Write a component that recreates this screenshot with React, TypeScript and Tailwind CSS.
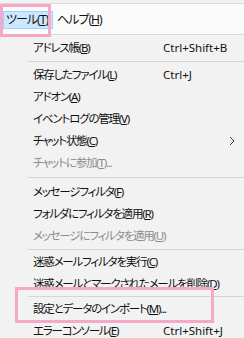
import React from "react";

type Item =
  | { sep: true; h: string }
  | {
      sep?: false;
      pre: string;
      key: string;
      post?: string;
      shortcut?: string;
      disabled?: boolean;
      arrow?: boolean;
    };

const items: Item[] = [
  { pre: "アドレス帳(", key: "B", post: ")", shortcut: "Ctrl+Shift+B" },
  { sep: true, h: "h-[5px]" },
  { pre: "保存したファイル(", key: "L", post: ")", shortcut: "Ctrl+J" },
  { pre: "アドオン(", key: "A", post: ")" },
  { pre: "イベントログの管理(", key: "V", post: ")" },
  { pre: "チャット状態(", key: "C", post: ")", arrow: true },
  { pre: "チャットに参加(", key: "T", post: ")...", disabled: true },
  { sep: true, h: "h-[7px]" },
  { pre: "メッセージフィルタ(", key: "F", post: ")" },
  { pre: "フォルダにフィルタを適用(", key: "R", post: ")" },
  { pre: "メッセージにフィルタを適用(", key: "U", post: ")", disabled: true },
  { sep: true, h: "h-[4px]" },
  { pre: "迷惑メールフィルタを実行(", key: "C", post: ")" },
  { pre: "迷惑メールとマークされたメールを削除(", key: "D", post: ")" },
  { sep: true, h: "h-[3px]" },
  { pre: "設定とデータのインポート(", key: "M", post: ")..." },
  { pre: "エラーコンソール(", key: "E", post: ")", shortcut: "Ctrl+Shift+J" },
];

export default function App() {
  return (
    <div
      className="relative w-[244px] h-[338px] overflow-hidden bg-[#f2f2f2] text-[12px] text-[#111] [font-feature-settings:'palt']"
      style={{ fontFamily: '"Noto Sans", "Noto Sans CJK JP", sans-serif' }}
    >
      {/* menubar */}
      <div className="h-[31px] bg-[#fbfbfb] border-t border-[#dcdcdc] mt-[3px] box-border flex items-start pt-[7px] pl-[3px]">
        <div className="h-[18px] pl-[2px] pr-[4px] bg-[#cce8ff] border border-[#99d1ff] flex items-center leading-none tracking-[-1px] whitespace-nowrap">
          ツール(<span className="underline">T</span>)
        </div>
        <div className="h-[18px] pl-[4px] flex items-center leading-none tracking-[-1px] whitespace-nowrap">
          ヘルプ(<span className="underline">H</span>)
        </div>
      </div>
      {/* dropdown */}
      <div className="border-t border-[#d9d9d9] pt-[2px]">
        {items.map((it, i) =>
          it.sep ? (
            <div key={i} className={`${it.h} flex items-center pl-[28px]`}>
              <div className="h-px w-full bg-[#d5d5d5]" />
            </div>
          ) : (
            <div
              key={i}
              className={`h-[22px] flex items-center pl-[33px] leading-none relative ${
                it.disabled ? "text-[#8c8c8c]" : ""
              }`}
            >
              <span className="whitespace-nowrap text-[11.5px] tracking-[-1.2px]">
                {it.pre}
                <span className="underline">{it.key}</span>
                {it.post}
              </span>
              {it.shortcut && (
                <span className="absolute left-[163px] whitespace-nowrap text-[11.5px]">{it.shortcut}</span>
              )}
              {it.arrow && (
                <svg className="absolute left-[229px]" width="6" height="10" viewBox="0 0 6 10">
                  <path d="M1 1 L5 5 L1 9" fill="none" stroke="#333" strokeWidth="1" />
                </svg>
              )}
            </div>
          )
        )}
      </div>
      {/* annotation boxes */}
      <div className="absolute left-0 top-[4px] w-[51px] h-[33px] border-[3px] border-[#f4a9c8]" />
      <div className="absolute left-[15px] top-[287px] w-[199px] h-[36px] border-[3px] border-[#f4a9c8]" />
    </div>
  );
}
